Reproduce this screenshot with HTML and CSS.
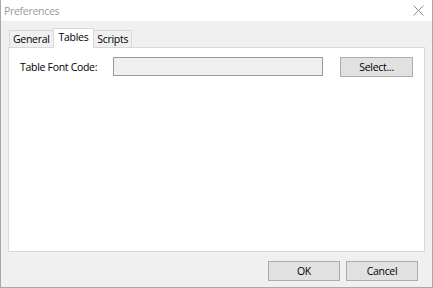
FILE: index.html
```html
<!DOCTYPE html>
<html lang="en">
<head>
    <meta charset="UTF-8">
    <title>Preferences</title>
    <link rel="stylesheet" href="styles.css">
</head>
<body>

    <div class="window">
        <div class="titlebar">
            <span class="title">Preferences</span>
            <svg class="close" width="11" height="11" viewBox="0 0 11 11">
                <path d="M0.5 0.5 L10.5 10.5 M10.5 0.5 L0.5 10.5" stroke="#8c8c8c" stroke-width="1" fill="none"/>
            </svg>
        </div>

        <div class="content">
            <div class="tabs">
                <div class="tab">General</div>
                <div class="tab active">Tables</div>
                <div class="tab">Scripts</div>
            </div>

            <div class="panel">
                <div class="row">
                    <label class="label">Table Font Code:</label>
                    <input type="text" class="field">
                    <button class="btn select-btn">Select...</button>
                </div>
            </div>

            <div class="footer">
                <button class="btn">OK</button>
                <button class="btn">Cancel</button>
            </div>
        </div>
    </div>

</body>
</html>
```

FILE: styles.css
```css
body {
    margin: 0;
    padding: 0;
    font-family: "Open Sans", "Noto Sans", sans-serif;
    font-size: 10.5px;
    letter-spacing: -0.3px;
    color: #000;
    background: #f0f0f0;
}
.window {
    width: 433px;
    height: 288px;
    box-sizing: border-box;
    border: 1px solid #a8a8a8;
    border-top: none;
    display: flex;
    flex-direction: column;
}
.titlebar {
    height: 21px;
    background: white;
    display: flex;
    align-items: center;
    justify-content: space-between;
    padding: 0 8px 0 3px;
}
.title {
    color: #9a9a9a;
    font-size: 10.5px;
}
.content {
    flex: 1;
    background: #f0f0f0;
    padding: 7px 7px 0 7px;
    display: flex;
    flex-direction: column;
}
.tabs {
    display: flex;
    align-items: flex-end;
    padding-left: 1px;
    height: 19px;
}
.tab {
    height: 16px;
    line-height: 17px;
    padding: 0 3px;
    border: 1px solid #d9d9d9;
    border-bottom: none;
    background: #f0f0f0;
    margin-right: -1px;
}
.tab.active {
    height: 19px;
    line-height: 16px;
    background: white;
    position: relative;
    margin-bottom: -1px;
    padding: 0 5px;
    z-index: 1;
}
.panel {
    height: 194px;
    background: white;
    border: 1px solid #d9d9d9;
    padding: 9px 11px 0 11px;
}
.row {
    display: flex;
    align-items: flex-start;
}
.label {
    width: 93px;
    line-height: 20px;
    white-space: nowrap;
}
.field {
    width: 211px;
    height: 19px;
    box-sizing: border-box;
    border: 1px solid #9a9a9a;
    background: #f0f0f0;
    margin: 0;
    padding: 0 2px;
}
.btn {
    width: 72px;
    height: 20px;
    box-sizing: border-box;
    border: 1px solid #adadad;
    background: #e1e1e1;
    font-family: "Open Sans", "Noto Sans", sans-serif;
    font-size: 10.5px;
    letter-spacing: -0.3px;
    color: #000;
    padding: 0;
    margin: 0;
}
.select-btn {
    width: 73px;
    margin-left: 17px;
}
.footer {
    display: flex;
    justify-content: flex-end;
    gap: 6px;
    padding: 9px 7px 0 0;
}
```
